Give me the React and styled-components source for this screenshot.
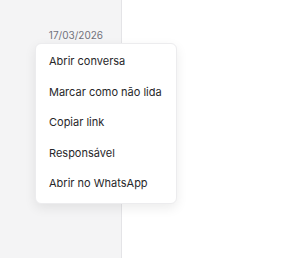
import React from 'react';
import styled, { createGlobalStyle } from 'styled-components';

const items = [
  'Abrir conversa',
  'Marcar como não lida',
  'Copiar link',
  'Responsável',
  'Abrir no WhatsApp'
];

const App = () => {
  return (
    <Page>
      <GlobalStyle />
      <Sidebar>
        <ChatRow>
          <DateText>17/03/2026</DateText>
        </ChatRow>
        <Menu>
          {items.map((label) => (
            <MenuItem key={label}>{label}</MenuItem>
          ))}
        </Menu>
      </Sidebar>
      <Main />
    </Page>
  );
};

export default App;

const GlobalStyle = createGlobalStyle`
  html, body {
    margin: 0;
    padding: 0;
    background: #ffffff;
    font-family: Inter, "Noto Sans", sans-serif;
  }
`;

const Page = styled.div`
  display: flex;
  width: 290px;
  height: 258px;
  overflow: hidden;
`;

const Sidebar = styled.div`
  position: relative;
  width: 121px;
  flex-shrink: 0;
  background: #f4f4f5;
  border-right: 1px solid #e4e4e7;
`;

const ChatRow = styled.div`
  display: flex;
  justify-content: flex-end;
  padding: 29px 18px 0 0;
`;

const DateText = styled.span`
  font-size: 10px;
  line-height: 13px;
  color: #71717a;
`;

const Main = styled.div`
  flex: 1;
  background: #ffffff;
`;

const Menu = styled.div`
  position: absolute;
  top: 43px;
  left: 35px;
  width: 142px;
  box-sizing: border-box;
  padding: 2px 0 4px;
  background: #ffffff;
  border: 1px solid #ececee;
  border-radius: 6px;
  box-shadow: 0 4px 12px rgba(0, 0, 0, 0.08);
  z-index: 10;
`;

const MenuItem = styled.div`
  display: flex;
  align-items: center;
  height: 30.5px;
  padding: 0 13px;
  font-size: 11px;
  color: #27272a;
  white-space: nowrap;
`;
